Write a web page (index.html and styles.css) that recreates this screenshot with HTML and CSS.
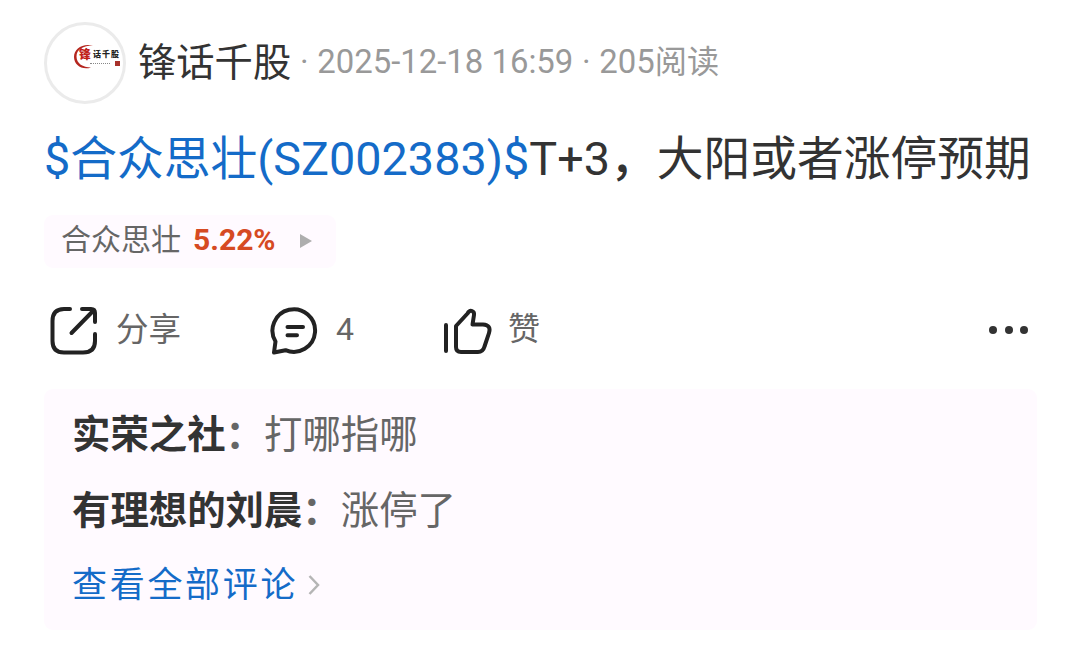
FILE: index.html
```html
<!DOCTYPE html>
<html lang="zh-CN">
<head>
<meta charset="utf-8">
<title>锋话千股</title>
<link rel="stylesheet" href="styles.css">
</head>
<body>
<article class="post">
  <header class="author">
    <div class="avatar">
      <svg class="logo-ring" viewBox="0 0 22 26"><path d="M20 1.500C9 -1 1 5 1 13c0 8 8 13.500 17 10.500C10 23.500 3.500 19.500 3.500 12.500S10 1.500 20 1.500z" fill="#b5261f"/></svg>
      <span class="logo-red">锋</span>
      <span class="logo-dark">话千股</span>
      <span class="logo-line"></span>
      <span class="logo-seal"></span>
    </div>
    <span class="name">锋话千股</span>
    <span class="meta"><span class="dot">·</span><span class="date">2025-12-18 16:59</span><span class="dot">·</span><span class="reads">205<span class="unit">阅读</span></span></span>
  </header>
  <h1 class="title"><a class="stock">$合众思壮(SZ002383)$</a>T+3<span class="comma">，</span>大阳或者涨停预期</h1>
  <div class="chip">
    <span class="chip-name">合众思壮</span>
    <b class="chip-rate">5.22%</b>
    <svg class="chip-arrow" viewBox="0 0 12 14"><path d="M0 0L12 7 0 14z" fill="#aeaeae"/></svg>
  </div>
  <nav class="actions">
    <div class="action share">
      <svg class="icon" viewBox="0 0 50 50"><path d="M21 3H15Q3.500 3 3.500 15V35Q3.500 46.500 15 46.500H34Q46 46.500 46 35V28M33 3H42Q46 3 46 7V16M45 4L22.500 27"/></svg>
      <span class="label">分享</span>
    </div>
    <div class="action comment">
      <svg class="icon" viewBox="0 0 50 50"><path d="M4 46.500L5.500 35.500A21.300 21.300 0 1 1 15.500 44.200L4 46.500z"/><path d="M17.500 21H33M17.500 29.300H27"/></svg>
      <span class="count">4</span>
    </div>
    <div class="action like">
      <svg class="icon" viewBox="0 0 50 50"><path d="M3 19V45M13 20L24.500 7.500Q26.500 4 29 5Q31.500 6 31 9L29.500 18.500H40Q48.500 19 46 27L41.500 40.500Q40 46 35 46H18Q13 46 13 41z"/></svg>
      <span class="label">赞</span>
    </div>
    <div class="more"><i></i><i></i><i></i></div>
  </nav>
  <section class="comments">
    <p class="row"><b>实荣之社</b><span class="colon">：</span>打哪指哪</p>
    <p class="row"><b>有理想的刘晨</b><span class="colon">：</span>涨停了</p>
    <a class="all"><span class="all-text">查看全部评论</span><svg class="chevron" viewBox="0 0 12 20"><path d="M1.500 1L10 10 1.500 19"/></svg></a>
  </section>
</article>
</body>
</html>
```
FILE: styles.css
```css
* { box-sizing: border-box; }
body {
  margin: 0;
  background: #fff;
  color: #333;
  font-family: Roboto, "Noto Sans CJK SC", sans-serif;
  white-space: nowrap;
}
.post { padding: 22px 42px 0 44px; }
.author { display: flex; align-items: center; height: 82px; }
.avatar {
  position: relative;
  width: 82px;
  height: 82px;
  border: 3px solid #ebebeb;
  border-radius: 50%;
  margin-right: 12px;
}
.avatar > * { position: absolute; }
.logo-ring { left: 26px; top: 19px; width: 22px; height: 26px; }
.logo-red { left: 32px; top: 22px; font-size: 12px; line-height: 16px; font-weight: 900; color: #c0211a; }
.logo-dark { left: 46px; top: 22px; font-size: 8px; line-height: 16px; font-weight: 900; color: #222; letter-spacing: 1px; }
.logo-line { left: 43px; top: 38px; width: 20px; border-top: 1px dotted #888; }
.logo-seal { left: 68px; top: 36px; width: 5px; height: 5px; background: #a8322b; }
.name { font-size: 38.3px; line-height: 50px; }
.meta { display: flex; padding-bottom: 2px; font-size: 32.9px; line-height: 50px; color: #999; }
.unit { font-size: 32.2px; }
.dot { width: 26px; text-align: center; }
.title { margin: 25px 0 0; font-size: 46.75px; line-height: 61px; font-weight: 400; }
.comma { font-weight: 500; }
.stock { color: #146bc8; }
.chip {
  display: flex;
  align-items: center;
  width: 292px;
  height: 53px;
  margin-top: 25px;
  padding-left: 17px;
  border-radius: 9px;
  background: #fffaff;
  font-size: 30px;
}
.chip-name { padding-bottom: 9px; color: #666; }
.chip-rate { margin-left: 12px; padding-bottom: 4px; color: #d64a22; }
.chip-arrow { width: 12px; height: 14px; margin-left: 24px; margin-bottom: 2px; }
.actions { display: flex; align-items: center; height: 50px; margin-top: 38px; padding-left: 5px; font-size: 32px; color: #666; }
.action { display: flex; align-items: center; }
.label { padding-bottom: 10px; }
.count { padding-bottom: 5px; }
.icon { width: 50px; height: 50px; fill: none; stroke: #222; stroke-width: 4; stroke-linecap: round; stroke-linejoin: round; }
.share { width: 221px; gap: 17px; }
.share .label { font-size: 32.5px; }
.comment { width: 173px; gap: 16px; }
.like { gap: 15px; }
.more { display: flex; gap: 7.5px; margin-left: auto; margin-right: 10px; margin-bottom: 2px; }
.more i { width: 8px; height: 8px; border-radius: 50%; background: #333; }
.comments { width: 993px; height: 241px; margin-top: 33px; padding: 8px 28px; border-radius: 9px; background: #fffaff; color: #666; }
.row { margin: 0; font-size: 38.4px; line-height: 76px; }
.row b { color: #333; }
.colon { font-weight: 700; }
.all { display: flex; align-items: center; height: 72px; font-size: 35px; letter-spacing: 2.7px; color: #146bc8; }
.all-text { padding-bottom: 8px; }
.chevron { width: 12px; height: 20px; margin-left: 10px; fill: none; stroke: #b5b5b5; stroke-width: 2.5; }
```
